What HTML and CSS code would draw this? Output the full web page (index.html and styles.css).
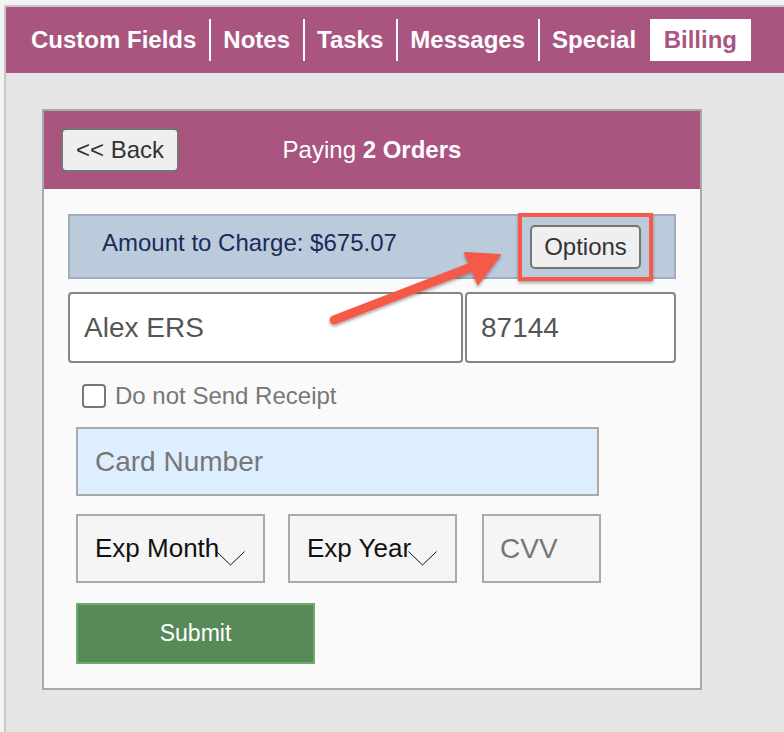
FILE: index.html
```html
<!DOCTYPE html>
<html lang="en">

<head>
	<meta charset="UTF-8">
	<title>Billing</title>
	<link rel="stylesheet" href="styles.css">
</head>

<body>

	<div class="page">

		<nav class="tabs">
			<div class="tab">Custom Fields</div>
			<div class="tab">Notes</div>
			<div class="tab">Tasks</div>
			<div class="tab">Messages</div>
			<div class="tab">Special</div>
			<div class="tab active">Billing</div>
		</nav>

		<div class="pay-card">

			<header class="pay-header">
				<button class="btn back">&lt;&lt; Back</button>
				<div class="pay-title">Paying <b>2 Orders</b></div>
			</header>

			<div class="pay-body">

				<div class="amount">
					<span class="amount-text">Amount to Charge: $675.07</span>
					<span class="highlight">
						<button class="btn options">Options</button>
					</span>
				</div>

				<div class="name-row">
					<input class="field name" type="text" value="Alex ERS">
					<input class="field zip" type="text" value="87144">
				</div>

				<label class="receipt">
					<span class="check"></span>
					Do not Send Receipt
				</label>

				<input class="card-number" type="text" placeholder="Card Number">

				<div class="exp-row">
					<div class="select month">
						<span>Exp Month</span>
						<svg class="chevron" width="29" height="15" viewBox="0 0 29 15"><polyline points="0.5,0.5 14.5,14 28.5,0.5" fill="none" stroke="#111" stroke-width="1"/></svg>
					</div>
					<div class="select year">
						<span>Exp Year</span>
						<svg class="chevron" width="29" height="15" viewBox="0 0 29 15"><polyline points="0.5,0.5 14.5,14 28.5,0.5" fill="none" stroke="#111" stroke-width="1"/></svg>
					</div>
					<input class="cvv" type="text" placeholder="CVV">
				</div>

				<button class="submit">Submit</button>

			</div>
		</div> <!-- end pay-card -->

	</div> <!-- end page -->

	<!-- annotation arrow -->
	<svg class="arrow" width="784" height="732" viewBox="0 0 784 732">
		<defs>
			<filter id="shadow" x="-20%" y="-20%" width="140%" height="140%">
				<feDropShadow dx="0" dy="2" stdDeviation="1.5" flood-color="#000" flood-opacity=".35" />
			</filter>
		</defs>
		<g filter="url(#shadow)" fill="#f55a4a" stroke="#f55a4a">
			<line x1="334" y1="320" x2="474" y2="266" stroke-width="9" stroke-linecap="round" />
			<polygon points="500,255 465,253 478,284" stroke-width="2" stroke-linejoin="round" />
		</g>
	</svg>

</body>

</html>
```

FILE: styles.css
```css
body {
	background: #f3f3f3;
	font-family: 'Liberation Sans', Arial, sans-serif;
	margin: 0;
	position: relative;
}

button,
input {
	font-family: inherit;
	box-sizing: border-box;
	margin: 0;
}

.page {
	background: #e6e6e6;
	border-left: 2px solid #c9c9c9;
	border-top: 2px solid #c9c9c9;
	box-sizing: border-box;
	margin: 5px 0 0 4px;
	min-height: 727px;
	overflow: hidden;
}

.tabs {
	align-items: center;
	background: #a9557f;
	display: flex;
	height: 66px;
	padding-left: 12.5px;
}

.tab {
	color: #fff;
	font-size: 24px;
	font-weight: 700;
	height: 42px;
	line-height: 42px;
	padding: 0 12.5px;
}

.tab + .tab {
	border-left: 2px solid #fff;
}

.tab.active {
	background: #fff;
	border-left: 0;
	color: #a9557f;
	margin-left: 1px;
	padding: 0 14px;
}

.pay-card {
	background: #fafafa;
	border: 2px solid #aaa;
	box-sizing: border-box;
	margin: 36px 0 0 36px;
	width: 660px;
}

.pay-header {
	align-items: center;
	background: #a9557f;
	display: grid;
	grid-template-columns: 1fr auto 1fr;
	height: 78px;
	padding: 0 17px;
}

.btn {
	background: #efefef;
	border: 2px solid #757575;
	border-radius: 5px;
	color: #333;
	font-size: 24px;
	height: 44px;
	padding: 0;
}

.back {
	width: 118px;
}

.pay-title {
	color: #fff;
	font-size: 24px;
}

.pay-body {
	padding: 25px 24px 24px;
}

.amount {
	align-items: center;
	background: #bccbdb;
	border: 2px solid #a3abbf;
	box-sizing: border-box;
	display: flex;
	height: 65px;
	justify-content: space-between;
	padding: 0 33px 0 32px;
}

.amount-text {
	color: #1a2b5b;
	font-size: 24px;
	margin-bottom: 7px;
}

.highlight {
	display: block;
	position: relative;
}

.highlight:after {
	border: 4px solid #f55a4a;
	bottom: -12px;
	box-shadow: 0 2px 3px rgba(0, 0, 0, .35);
	content: "";
	left: -12px;
	position: absolute;
	right: -12px;
	top: -12px;
}

.options {
	display: block;
	width: 111px;
}

.name-row {
	display: flex;
	gap: 2px;
	margin-top: 13px;
}

.field {
	background: #fff;
	border: 2px solid #858585;
	border-radius: 4px;
	color: #555;
	font-size: 28px;
	height: 71px;
	padding: 0 14px;
}

.name {
	width: 395px;
}

.zip {
	width: 211px;
}

.receipt {
	align-items: center;
	color: #777;
	display: flex;
	font-size: 24px;
	gap: 9px;
	margin: 19px 0 0 14px;
}

.check {
	background: #fff;
	border: 2px solid #777;
	border-radius: 4px;
	box-sizing: border-box;
	height: 24px;
	width: 24px;
}

.card-number {
	background: #ddeeff;
	border: 2px solid #aaa;
	display: block;
	font-size: 28px;
	height: 69px;
	margin: 17px 0 0 8px;
	padding: 0 17px;
	width: 523px;
}

.card-number::placeholder,
.cvv::placeholder {
	color: #777;
}

.exp-row {
	display: flex;
	margin: 18px 0 0 8px;
}

.select,
.cvv {
	background: #f5f5f5;
	border: 2px solid #aaa;
	box-sizing: border-box;
	height: 69px;
}

.select {
	align-items: center;
	color: #111;
	display: flex;
	font-size: 26px;
	padding-left: 17px;
}

.chevron {
	margin: 20px 0 0 -3px;
}

.month {
	margin-right: 23px;
	width: 189px;
}

.year {
	margin-right: 25px;
	width: 169px;
}

.cvv {
	font-size: 28px;
	padding: 0 16px;
	width: 119px;
}

.submit {
	background: #578a58;
	border: 2px solid #6aae6a;
	color: #fff;
	display: block;
	font-size: 23px;
	height: 61px;
	margin: 20px 0 0 8px;
	width: 239px;
}

.arrow {
	left: 0;
	pointer-events: none;
	position: absolute;
	top: 0;
}
```
